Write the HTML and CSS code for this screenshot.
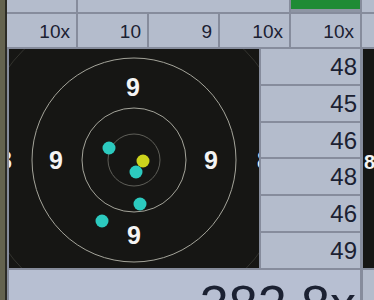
FILE: index.html
```html
<!DOCTYPE html>
<html lang="en">
<head>
  <meta charset="UTF-8" />
  <meta name="viewport" content="width=device-width, initial-scale=1.0"/>
  <title>Shooting monitor</title>
  <link rel="stylesheet" href="styles.css">
</head>
<body>
  <div class="screen">
    <div class="bezel"></div>
    <div class="panel">
      <div class="row head">
        <div class="cell"></div>
        <div class="cell wide"></div>
        <div class="cell green"></div>
        <div class="cell"></div>
      </div>

      <div class="row series">
        <div class="cell">10x</div>
        <div class="cell">10</div>
        <div class="cell">9</div>
        <div class="cell">10x</div>
        <div class="cell">10x</div>
        <div class="cell"></div>
      </div>

      <div class="main">
        <div class="target">
          <svg width="250" height="219" viewBox="0 0 250 219">
            <circle class="ring faint" cx="125" cy="111" r="156"/>
            <circle class="ring" cx="125" cy="111" r="102"/>
            <circle class="ring" cx="125" cy="111" r="52"/>
            <circle class="ring dim" cx="125" cy="111" r="26"/>
            <text class="label" x="124" y="38">9</text>
            <text class="label" x="47" y="111">9</text>
            <text class="label" x="202" y="111">9</text>
            <text class="label" x="125" y="186">9</text>
            <text class="label" x="-4" y="111">8</text>
            <text class="label" x="255" y="111">8</text>
            <circle class="shot" cx="100" cy="99" r="6.5"/>
            <circle class="shot last" cx="134" cy="112" r="6.5"/>
            <circle class="shot" cx="127" cy="123" r="6.5"/>
            <circle class="shot" cx="131" cy="155" r="6.5"/>
            <circle class="shot" cx="93" cy="172" r="6.5"/>
          </svg>
        </div>

        <div class="scores">
          <div class="score">48</div>
          <div class="score">45</div>
          <div class="score">46</div>
          <div class="score">48</div>
          <div class="score">46</div>
          <div class="score">49</div>
        </div>

        <div class="next"><span>8</span></div>
      </div>

      <div class="foot">
        <div class="total">382.8x</div>
        <div class="cell"></div>
      </div>
    </div>
  </div>
</body>
</html>
```

FILE: styles.css
```css
body {
  margin: 0;
  background: #868c9c;
  font-family: "Liberation Sans", Arial, sans-serif;
  color: #1b2132;
}

.screen {
  display: flex;
  width: 374px;
  height: 300px;
  overflow: hidden;
}

.bezel {
  width: 5px;
  flex: none;
  background: #64634f;
  border-right: 2px solid #2c2c26;
}

.panel {
  flex: 1;
  display: flex;
  flex-direction: column;
  gap: 2px;
  background: #868c9c;
}

.row {
  flex: none;
  display: grid;
  grid-template-columns: repeat(5, 69px) 1fr;
  column-gap: 2px;
}

.cell {
  background: #b4bccc;
}

.head {
  height: 12px;
}

.head .wide {
  grid-column: span 3;
}

.head .green {
  background: #1f8b35;
  border-bottom: 3px solid #8e95a4;
}

.series .cell {
  height: 33px;
  box-sizing: border-box;
  padding: 3px 6px 0 0;
  line-height: 30px;
  font-size: 19px;
  text-align: right;
}

.main {
  flex: none;
  display: grid;
  grid-template-columns: 250px 99px 1fr;
  column-gap: 2px;
  height: 219px;
  padding-left: 2px;
}

.target {
  background: #161614;
  overflow: hidden;
}

.target svg {
  display: block;
}

.ring {
  fill: none;
  stroke: #a4a49a;
  stroke-width: 1;
}

.ring.dim {
  stroke: #5e5e58;
}

.ring.faint {
  stroke: #34342f;
}

.label {
  fill: #f4f4f4;
  font-size: 25px;
  font-weight: bold;
  text-anchor: middle;
  dominant-baseline: central;
}

.shot {
  fill: #2ccabf;
}

.shot.last {
  fill: #cdd41c;
}

.scores {
  display: grid;
  grid-template-rows: repeat(6, 1fr);
  row-gap: 2px;
}

.score {
  background: #b4bccc;
  padding: 2px 3px 0 0;
  font-size: 24px;
  text-align: right;
  line-height: 32px;
}

.next {
  margin-left: 1px;
  background: #161614;
  color: #f4f4f4;
  font-size: 20px;
  font-weight: bold;
  display: flex;
  align-items: center;
  padding: 8px 0 0 1px;
}

.foot {
  flex: 1;
  min-height: 0;
  overflow: hidden;
  display: grid;
  grid-template-columns: 351px 1fr;
  column-gap: 3px;
  padding-left: 2px;
}

.total {
  background: #b7bfd2;
  padding: 8px 4px 0 0;
  font-size: 52px;
  line-height: 52px;
  text-align: right;
}
```
